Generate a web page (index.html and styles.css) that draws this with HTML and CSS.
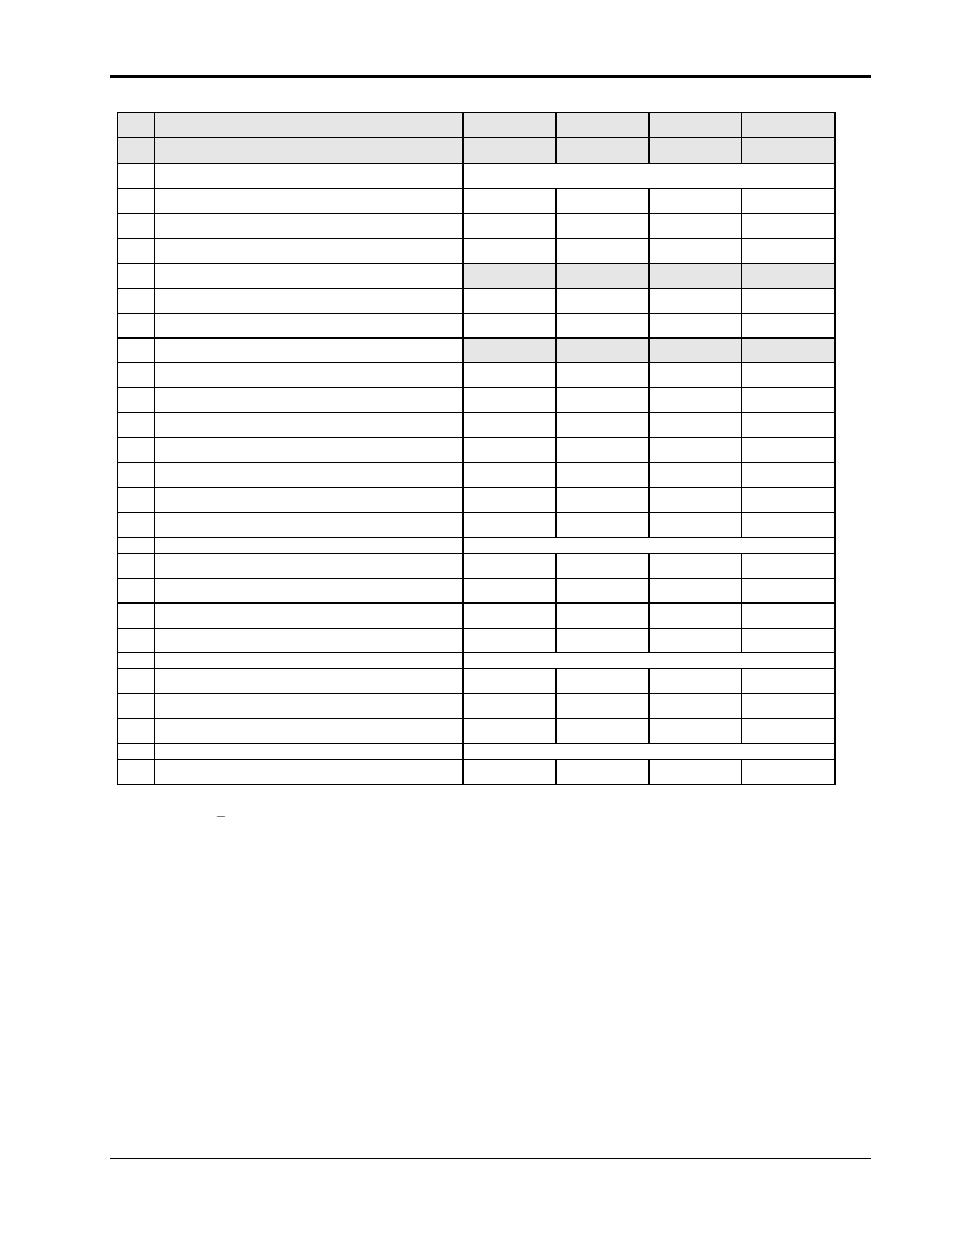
FILE: index.html
```html
<!DOCTYPE html>
<html>
<head>
<meta charset="utf-8">
<link rel="stylesheet" href="styles.css">
</head>
<body>
<div class="page">
  <div class="rule-top"></div>
  <div class="grid">
    <div class="row gray"><div class="c c1"></div><div class="c c2"></div><div class="c c3"></div><div class="c c4"></div><div class="c c5"></div><div class="c c6"></div></div>
    <div class="row gray"><div class="c c1"></div><div class="c c2"></div><div class="c c3"></div><div class="c c4"></div><div class="c c5"></div><div class="c c6"></div></div>
    <div class="row"><div class="c c1"></div><div class="c c2"></div><div class="c span"></div></div>
    <div class="row"><div class="c c1"></div><div class="c c2"></div><div class="c c3"></div><div class="c c4"></div><div class="c c5"></div><div class="c c6"></div></div>
    <div class="row"><div class="c c1"></div><div class="c c2"></div><div class="c c3"></div><div class="c c4"></div><div class="c c5"></div><div class="c c6"></div></div>
    <div class="row"><div class="c c1"></div><div class="c c2"></div><div class="c c3"></div><div class="c c4"></div><div class="c c5"></div><div class="c c6"></div></div>
    <div class="row vals-gray"><div class="c c1"></div><div class="c c2"></div><div class="c c3"></div><div class="c c4"></div><div class="c c5"></div><div class="c c6"></div></div>
    <div class="row"><div class="c c1"></div><div class="c c2"></div><div class="c c3"></div><div class="c c4"></div><div class="c c5"></div><div class="c c6"></div></div>
    <div class="row thick"><div class="c c1"></div><div class="c c2"></div><div class="c c3"></div><div class="c c4"></div><div class="c c5"></div><div class="c c6"></div></div>
    <div class="row vals-gray"><div class="c c1"></div><div class="c c2"></div><div class="c c3"></div><div class="c c4"></div><div class="c c5"></div><div class="c c6"></div></div>
    <div class="row"><div class="c c1"></div><div class="c c2"></div><div class="c c3"></div><div class="c c4"></div><div class="c c5"></div><div class="c c6"></div></div>
    <div class="row"><div class="c c1"></div><div class="c c2"></div><div class="c c3"></div><div class="c c4"></div><div class="c c5"></div><div class="c c6"></div></div>
    <div class="row"><div class="c c1"></div><div class="c c2"></div><div class="c c3"></div><div class="c c4"></div><div class="c c5"></div><div class="c c6"></div></div>
    <div class="row"><div class="c c1"></div><div class="c c2"></div><div class="c c3"></div><div class="c c4"></div><div class="c c5"></div><div class="c c6"></div></div>
    <div class="row"><div class="c c1"></div><div class="c c2"></div><div class="c c3"></div><div class="c c4"></div><div class="c c5"></div><div class="c c6"></div></div>
    <div class="row"><div class="c c1"></div><div class="c c2"></div><div class="c c3"></div><div class="c c4"></div><div class="c c5"></div><div class="c c6"></div></div>
    <div class="row"><div class="c c1"></div><div class="c c2"></div><div class="c c3"></div><div class="c c4"></div><div class="c c5"></div><div class="c c6"></div></div>
    <div class="row"><div class="c c1"></div><div class="c c2"></div><div class="c span"></div></div>
    <div class="row"><div class="c c1"></div><div class="c c2"></div><div class="c c3"></div><div class="c c4"></div><div class="c c5"></div><div class="c c6"></div></div>
    <div class="row thick"><div class="c c1"></div><div class="c c2"></div><div class="c c3"></div><div class="c c4"></div><div class="c c5"></div><div class="c c6"></div></div>
    <div class="row"><div class="c c1"></div><div class="c c2"></div><div class="c c3"></div><div class="c c4"></div><div class="c c5"></div><div class="c c6"></div></div>
    <div class="row"><div class="c c1"></div><div class="c c2"></div><div class="c c3"></div><div class="c c4"></div><div class="c c5"></div><div class="c c6"></div></div>
    <div class="row"><div class="c c1"></div><div class="c c2"></div><div class="c span"></div></div>
    <div class="row"><div class="c c1"></div><div class="c c2"></div><div class="c c3"></div><div class="c c4"></div><div class="c c5"></div><div class="c c6"></div></div>
    <div class="row"><div class="c c1"></div><div class="c c2"></div><div class="c c3"></div><div class="c c4"></div><div class="c c5"></div><div class="c c6"></div></div>
    <div class="row"><div class="c c1"></div><div class="c c2"></div><div class="c c3"></div><div class="c c4"></div><div class="c c5"></div><div class="c c6"></div></div>
    <div class="row"><div class="c c1"></div><div class="c c2"></div><div class="c span"></div></div>
    <div class="row"><div class="c c1"></div><div class="c c2"></div><div class="c c3"></div><div class="c c4"></div><div class="c c5"></div><div class="c c6"></div></div>
  </div>
  <p class="note">–</p>
  <div class="rule-bottom"></div>
</div>
</body>
</html>
```

FILE: styles.css
```css
html, body {
  margin: 0;
  padding: 0;
  background: #ffffff;
}

body {
  font-family: "Liberation Sans", Arial, sans-serif;
  color: #000000;
}

.page {
  padding-top: 75px;
  height: 1235px;
  box-sizing: border-box;
}

.rule-top {
  height: 3px;
  background: #000000;
  margin: 0 83px 0 110px;
}

.grid {
  display: grid;
  width: 718px;
  margin: 34px 0 0 117px;
  border-top: 1px solid #000000;
  border-left: 1px solid #000000;
  grid-template-columns: 37px 309px 93px 93px 92px 94px;
  grid-template-rows:
    25px 26px 25px 25px 25px 25px 25px 25px 25px
    24px 25px 25px 25px 25px 25px 25px 25px
    16px 25px 25px 25px 24px 16px 25px 25px 25px 16px 25px;
}

.row {
  display: contents;
}

.c {
  box-sizing: border-box;
  border-bottom: 1px solid #000000;
  border-right: 1px solid #000000;
  background: #ffffff;
}

.c2, .c3, .c4, .c6, .span {
  border-right-width: 2px;
}

.span {
  grid-column: 3 / span 4;
}

.row.thick > .c {
  border-bottom-width: 2px;
}

.row.gray > .c {
  background: #e6e6e6;
}

.row.vals-gray > .c3,
.row.vals-gray > .c4,
.row.vals-gray > .c5,
.row.vals-gray > .c6 {
  background: #e6e6e6;
}

.note {
  margin: 23px 0 0 217px;
  font-size: 14px;
  line-height: 14px;
  color: #7a7a7a;
}

.rule-bottom {
  height: 1px;
  background: #000000;
  margin: 336px 83px 0 110px;
}
```
